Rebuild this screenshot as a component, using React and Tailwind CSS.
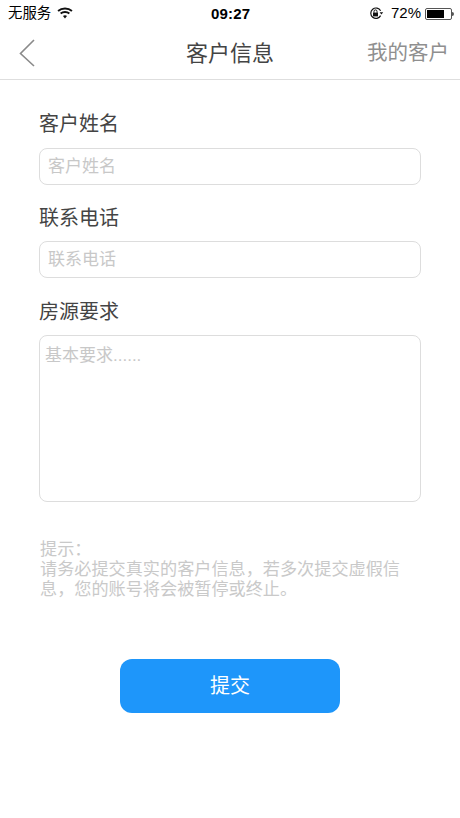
import React from 'react';

const cjk = "font-['Liberation_Sans','Noto_Sans_CJK_SC',sans-serif]";

const StatusBar = () => (
  <div className="h-[27px] flex items-center justify-between pl-2 pr-[6px] text-black text-[14.4px] relative">
    <div className="flex items-center gap-[6px]">
      <span>无服务</span>
      <svg width="16" height="12" viewBox="0 0 15 11" fill="none" stroke="#111" strokeWidth="1.8">
        <path d="M1 3.6C4.6.5 10.4.5 14 3.6" />
        <path d="M3.4 6C5.7 4.1 9.3 4.1 11.6 6" />
        <path d="M7.5 10.6 5.6 8.3C6.7 7.5 8.3 7.5 9.4 8.3Z" fill="#111" stroke="none" />
      </svg>
    </div>
    <span className="absolute left-[211px] top-[3px] text-[15px] font-bold tracking-[0.2px]">09:27</span>
    <div className="flex items-center text-[15px]">
      <svg width="15" height="13" viewBox="0 0 15 13" fill="none" className="mr-[7px]">
        <path d="M11.6 8.6A5.2 5.2 0 1 1 11.6 3.8" stroke="#111" strokeWidth="1.2" />
        <path d="M10.6 5.2h3.6l-1.8 2.2z" fill="#111" />
        <rect x="4" y="5.6" width="5" height="3.8" fill="#111" />
        <path d="M5 5.8V4.4a1.5 1.5 0 0 1 3 0v1.4" stroke="#111" strokeWidth="1" />
      </svg>
      <span>72%</span>
      <div className="ml-1 flex items-center">
        <div className="w-[27px] h-[12px] border border-[#555] rounded-[2px] p-px">
          <div className="h-full w-[72%] bg-black" />
        </div>
        <div className="w-[2px] h-[4px] bg-[#555] rounded-r-sm" />
      </div>
    </div>
  </div>
);

const Field = ({ label, placeholder, className, gap }) => (
  <div className={className}>
    <div className="text-[20px] leading-[28px] text-[#444]">{label}</div>
    <input
      placeholder={placeholder}
      className={`${gap} block w-full h-[37px] px-[8px] bg-white border border-[#ddd] rounded-[8px] text-[17px] outline-none placeholder:text-[#c8c8c8]`}
    />
  </div>
);

export default function App() {
  return (
    <div className={`w-[460px] h-[818px] bg-white overflow-hidden relative ${cjk}`}>
      <StatusBar />

      {/* nav */}
      <div className="h-[53px] border-b border-[#dedede] flex items-center justify-between pl-[19px] pr-[11px]">
        <svg width="16" height="28" viewBox="0 0 16 28" fill="none" stroke="#8a8a8a" strokeWidth="1.6">
          <path d="M15 1 1.5 14.5 15 27" />
        </svg>
        <span className="absolute left-0 right-0 text-center text-[22px] text-[#444]">客户信息</span>
        <span className="relative text-[20.5px] text-[#8f8f8f]">我的客户</span>
      </div>

      <div className="pl-[39px] pr-[39px]">
        <Field label="客户姓名" placeholder="客户姓名" className="pt-[30px]" gap="mt-[10px]" />
        <Field label="联系电话" placeholder="联系电话" className="pt-[19px]" gap="mt-[9px]" />

        <div className="pt-[20px]">
          <div className="text-[20px] leading-[28px] text-[#444]">房源要求</div>
          <textarea
            placeholder="基本要求......"
            className="mt-[9px] block w-full h-[167px] px-[5px] pt-[10px] bg-white border border-[#ddd] rounded-[8px] text-[17px] leading-[20px] outline-none resize-none placeholder:text-[#c8c8c8]"
          />
        </div>

        <div className="mt-[37px] pl-px pr-px text-[17.15px] leading-[20px] text-[#c9c9c9]">
          <div>提示：</div>
          <div>请务必提交真实的客户信息，若多次提交虚假信息，您的账号将会被暂停或终止。</div>
        </div>

        <div className="flex justify-center mt-[60px]">
          <button className="w-[220px] h-[54px] bg-[#1e96fa] rounded-[12px] text-white text-[20px]">提交</button>
        </div>
      </div>
    </div>
  );
}
